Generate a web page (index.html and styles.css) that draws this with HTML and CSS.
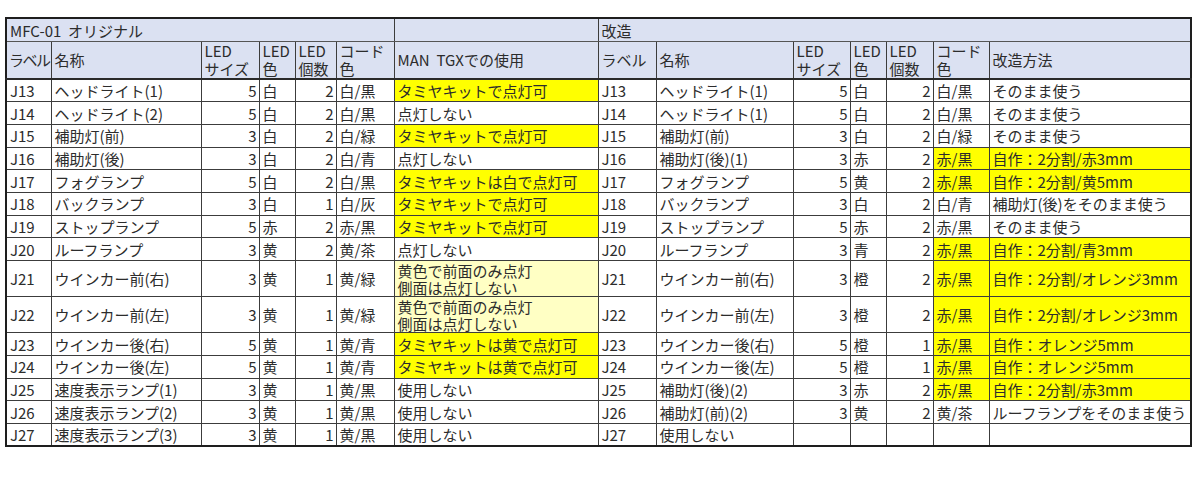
FILE: index.html
```html
<!DOCTYPE html>
<html lang="ja">
<head>
<meta charset="utf-8">
<link rel="stylesheet" href="styles.css">
</head>
<body>
<table class="sheet">
  <colgroup>
    <col class="w45"><col class="w150"><col class="w58"><col class="w36"><col class="w41"><col class="w58"><col class="w204">
    <col class="w58"><col class="w137"><col class="w57"><col class="w36"><col class="w47"><col class="w56"><col class="w202">
  </colgroup>
  <thead>
    <tr class="h1">
      <th colspan="6">MFC-01&nbsp; オリジナル</th>
      <th></th>
      <th colspan="7">改造</th>
    </tr>
    <tr class="h2">
      <th class="sq">ラベル</th><th>名称</th><th>LED<br>サイズ</th><th>LED<br>色</th><th>LED<br>個数</th><th>コード<br>色</th><th>MAN&nbsp; TGXでの使用</th>
      <th>ラベル</th><th>名称</th><th>LED<br>サイズ</th><th>LED<br>色</th><th>LED<br>個数</th><th>コード<br>色</th><th>改造方法</th>
    </tr>
  </thead>
  <tbody>
    <tr><td>J13</td><td>ヘッドライト(1)</td><td class="n">5</td><td>白</td><td class="n">2</td><td>白/黒</td><td class="y">タミヤキットで点灯可</td>
      <td>J13</td><td>ヘッドライト(1)</td><td class="n">5</td><td>白</td><td class="n">2</td><td>白/黒</td><td>そのまま使う</td></tr>
    <tr><td>J14</td><td>ヘッドライト(2)</td><td class="n">5</td><td>白</td><td class="n">2</td><td>白/黒</td><td>点灯しない</td>
      <td>J14</td><td>ヘッドライト(1)</td><td class="n">5</td><td>白</td><td class="n">2</td><td>白/黒</td><td>そのまま使う</td></tr>
    <tr><td>J15</td><td>補助灯(前)</td><td class="n">3</td><td>白</td><td class="n">2</td><td>白/緑</td><td class="y">タミヤキットで点灯可</td>
      <td>J15</td><td>補助灯(前)</td><td class="n">3</td><td>白</td><td class="n">2</td><td>白/緑</td><td>そのまま使う</td></tr>
    <tr><td>J16</td><td>補助灯(後)</td><td class="n">3</td><td>白</td><td class="n">2</td><td>白/青</td><td>点灯しない</td>
      <td>J16</td><td>補助灯(後)(1)</td><td class="n">3</td><td>赤</td><td class="n">2</td><td class="y">赤/黒</td><td class="y">自作：2分割/赤3mm</td></tr>
    <tr><td>J17</td><td>フォグランプ</td><td class="n">5</td><td>白</td><td class="n">2</td><td>白/黒</td><td class="y">タミヤキットは白で点灯可</td>
      <td>J17</td><td>フォグランプ</td><td class="n">5</td><td>黄</td><td class="n">2</td><td class="y">赤/黒</td><td class="y">自作：2分割/黄5mm</td></tr>
    <tr><td>J18</td><td>バックランプ</td><td class="n">3</td><td>白</td><td class="n">1</td><td>白/灰</td><td class="y">タミヤキットで点灯可</td>
      <td>J18</td><td>バックランプ</td><td class="n">3</td><td>白</td><td class="n">2</td><td>白/青</td><td>補助灯(後)をそのまま使う</td></tr>
    <tr><td>J19</td><td>ストップランプ</td><td class="n">5</td><td>赤</td><td class="n">2</td><td>赤/黒</td><td class="y">タミヤキットで点灯可</td>
      <td>J19</td><td>ストップランプ</td><td class="n">5</td><td>赤</td><td class="n">2</td><td>赤/黒</td><td>そのまま使う</td></tr>
    <tr><td>J20</td><td>ルーフランプ</td><td class="n">3</td><td>黄</td><td class="n">2</td><td>黄/茶</td><td>点灯しない</td>
      <td>J20</td><td>ルーフランプ</td><td class="n">3</td><td>青</td><td class="n">2</td><td class="y">赤/黒</td><td class="y">自作：2分割/青3mm</td></tr>
    <tr class="tall"><td>J21</td><td>ウインカー前(右)</td><td class="n">3</td><td>黄</td><td class="n">1</td><td>黄/緑</td><td class="ly">黄色で前面のみ点灯<br>側面は点灯しない</td>
      <td>J21</td><td>ウインカー前(右)</td><td class="n">3</td><td>橙</td><td class="n">2</td><td class="y">赤/黒</td><td class="y">自作：2分割/オレンジ3mm</td></tr>
    <tr class="tall"><td>J22</td><td>ウインカー前(左)</td><td class="n">3</td><td>黄</td><td class="n">1</td><td>黄/緑</td><td class="ly">黄色で前面のみ点灯<br>側面は点灯しない</td>
      <td>J22</td><td>ウインカー前(左)</td><td class="n">3</td><td>橙</td><td class="n">2</td><td class="y">赤/黒</td><td class="y">自作：2分割/オレンジ3mm</td></tr>
    <tr><td>J23</td><td>ウインカー後(右)</td><td class="n">5</td><td>黄</td><td class="n">1</td><td>黄/青</td><td class="y">タミヤキットは黄で点灯可</td>
      <td>J23</td><td>ウインカー後(右)</td><td class="n">5</td><td>橙</td><td class="n">1</td><td class="y">赤/黒</td><td class="y">自作：オレンジ5mm</td></tr>
    <tr><td>J24</td><td>ウインカー後(左)</td><td class="n">5</td><td>黄</td><td class="n">1</td><td>黄/青</td><td class="y">タミヤキットは黄で点灯可</td>
      <td>J24</td><td>ウインカー後(左)</td><td class="n">5</td><td>橙</td><td class="n">1</td><td class="y">赤/黒</td><td class="y">自作：オレンジ5mm</td></tr>
    <tr><td>J25</td><td>速度表示ランプ(1)</td><td class="n">3</td><td>黄</td><td class="n">1</td><td>黄/黒</td><td>使用しない</td>
      <td>J25</td><td>補助灯(後)(2)</td><td class="n">3</td><td>赤</td><td class="n">2</td><td class="y">赤/黒</td><td class="y">自作：2分割/赤3mm</td></tr>
    <tr><td>J26</td><td>速度表示ランプ(2)</td><td class="n">3</td><td>黄</td><td class="n">1</td><td>黄/黒</td><td>使用しない</td>
      <td>J26</td><td>補助灯(前)(2)</td><td class="n">3</td><td>黄</td><td class="n">2</td><td>黄/茶</td><td>ルーフランプをそのまま使う</td></tr>
    <tr><td>J27</td><td>速度表示ランプ(3)</td><td class="n">3</td><td>黄</td><td class="n">1</td><td>黄/黒</td><td>使用しない</td>
      <td>J27</td><td>使用しない</td><td class="n"></td><td></td><td class="n"></td><td></td><td></td></tr>
  </tbody>
</table>
</body>
</html>
```

FILE: styles.css
```css
html, body {
  margin: 0;
  padding: 0;
  background: #ffffff;
}

body {
  padding: 17px 0 0 5px;
}

.sheet {
  border-collapse: collapse;
  table-layout: fixed;
  width: 1186px;
  border: 2px solid #1e1e1e;
  font-family: "Noto Sans CJK JP", "Noto Sans", sans-serif;
  font-size: 15px;
  color: #2c2c2c;
}

.w45 { width: 45px; }
.w150 { width: 150px; }
.w58 { width: 58px; }
.w36 { width: 36px; }
.w41 { width: 41px; }
.w204 { width: 204px; }
.w137 { width: 137px; }
.w57 { width: 57px; }
.w47 { width: 47px; }
.w56 { width: 56px; }
.w202 { width: 202px; }

.sheet th,
.sheet td {
  border: 1px solid #3c3c3c;
  padding: 0 2px 0 3px;
  text-align: left;
  vertical-align: middle;
  white-space: nowrap;
  overflow: hidden;
  line-height: 17px;
  font-weight: 400;
}

.sheet th {
  background: #dbe1f2;
}

.h1 th {
  height: 22px;
  border-bottom-color: #555;
}

.h2 th {
  height: 36px;
  line-height: 18px;
  border-bottom: 2px solid #2a2a2a;
}

.h2 th.sq {
  letter-spacing: -1.5px;
  padding-left: 2px;
}

.sheet tbody tr {
  height: 22.7px;
}

.sheet tbody tr.tall {
  height: 36.2px;
}

.sheet td.n {
  text-align: right;
  padding-right: 2px;
}

.sheet td.y {
  background: #ffff00;
}

.sheet td.ly {
  background: #ffffc4;
}
```
